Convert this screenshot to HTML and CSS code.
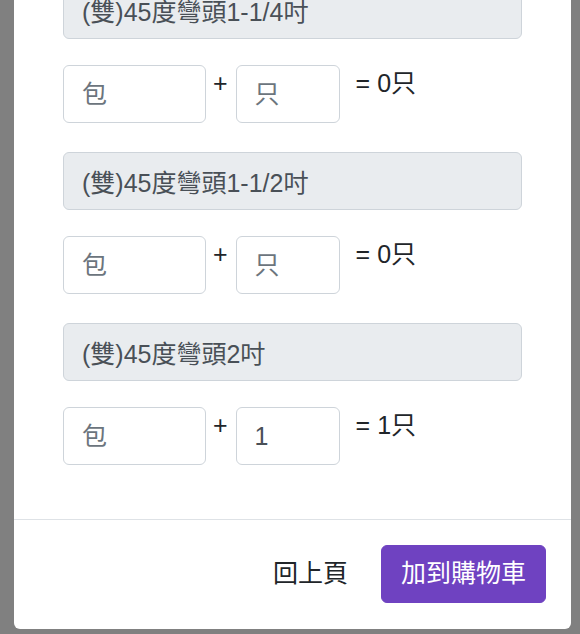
FILE: index.html
```html
<!DOCTYPE html>
<html lang="zh-Hant">
<head>
    <meta charset="UTF-8">
    <title>選擇數量</title>
    <meta name="viewport" content="width=device-width, initial-scale=1.0">
    <link rel="stylesheet" href="styles.css">
</head>
<body>
    <div class="dialog">
        <div class="dialog-body">
            <div class="item">
                <input class="name" type="text" value="(雙)45度彎頭1-1/4吋" disabled>
                <div class="qty">
                    <input class="pack" type="text" placeholder="包">
                    <span class="plus">+</span>
                    <input class="piece" type="text" placeholder="只">
                    <span class="total">= 0只</span>
                </div>
            </div>
            <div class="item">
                <input class="name" type="text" value="(雙)45度彎頭1-1/2吋" disabled>
                <div class="qty">
                    <input class="pack" type="text" placeholder="包">
                    <span class="plus">+</span>
                    <input class="piece" type="text" placeholder="只">
                    <span class="total">= 0只</span>
                </div>
            </div>
            <div class="item">
                <input class="name" type="text" value="(雙)45度彎頭2吋" disabled>
                <div class="qty">
                    <input class="pack" type="text" placeholder="包">
                    <span class="plus">+</span>
                    <input class="piece" type="text" placeholder="只" value="1">
                    <span class="total">= 1只</span>
                </div>
            </div>
        </div>
        <div class="dialog-footer">
            <button class="btn-back" type="button">回上頁</button>
            <button class="btn-add" type="button">加到購物車</button>
        </div>
    </div>
</body>
</html>
```

FILE: styles.css
```css
*{ margin: 0; padding: 0; box-sizing: border-box}
html,body{
    height:100%;
    overflow: hidden;
}
body{
    background: #808080;
    display: flex;
    flex-direction: column;
    justify-content: flex-end;
    padding: 0 9px 5px 14px;
    font-family: "Liberation Sans", "Noto Sans CJK TC", sans-serif;
    font-size: 25px;
    line-height: 1.5;
    color: #212529;
}
.dialog{
    flex-shrink: 0;
    background: #fff;
    border-radius: 6px;
}
.dialog-body{
    padding: 20px 49px 54px;
}
.item{
    margin-bottom: 29px;
}
.item:last-child{
    margin-bottom: 0;
}
.name{
    display: block;
    width: 100%;
    height: 58px;
    padding: 0 18px;
    margin-bottom: 26px;
    font: inherit;
    color: #495057;
    background: #e9ecef;
    border: 1px solid #ced4da;
    border-radius: 6px;
}
.qty{
    display: flex;
    align-items: flex-start;
}
.qty input{
    height: 58px;
    padding: 0 18px;
    font: inherit;
    color: #495057;
    background: #fff;
    border: 1px solid #ced4da;
    border-radius: 6px;
}
.qty input::placeholder{
    color: #6c757d;
}
.qty .pack{
    width: 143px;
}
.qty .piece{
    width: 104px;
}
.plus{
    margin: 0 8px 0 7px;
}
.total{
    margin-left: 16px;
}
.dialog-footer{
    display: flex;
    justify-content: flex-end;
    align-items: center;
    border-top: 1px solid #dee2e6;
    padding: 25px 25px 26px;
}
.dialog-footer button{
    height: 58px;
    font: inherit;
    border-radius: 6px;
    cursor: pointer;
}
.btn-back{
    padding: 0 19px;
    background: none;
    border: 0;
    color: #212529;
}
.btn-add{
    margin-left: 14px;
    padding: 0 19px;
    background: #6f42c1;
    border: 1px solid #6f42c1;
    color: #fff;
}
```
